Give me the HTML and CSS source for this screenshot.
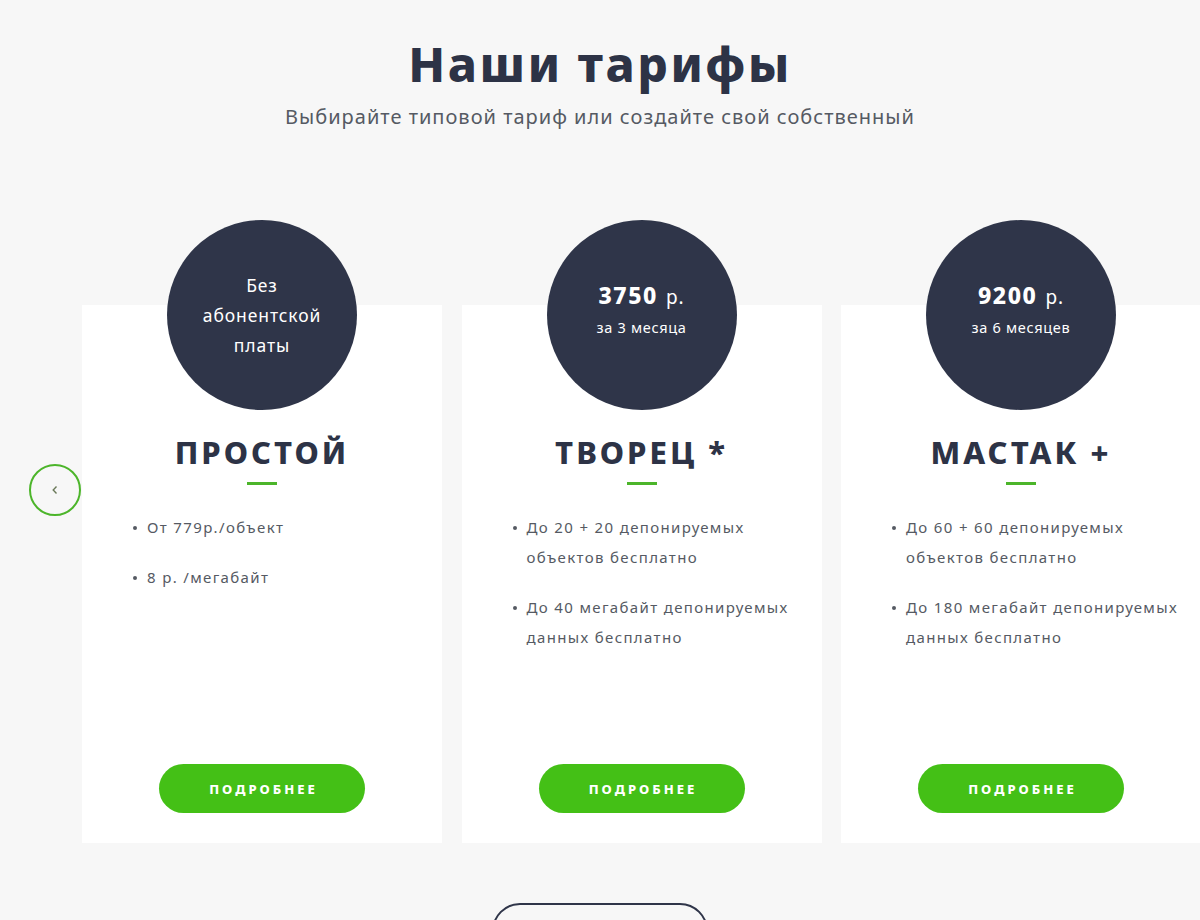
FILE: index.html
```html
<!DOCTYPE html>
<html lang="ru">
<head>
<meta charset="utf-8">
<title>Наши тарифы</title>
<link rel="stylesheet" href="styles.css">
</head>
<body>
<section class="tariffs">
  <header class="head">
    <h1 class="title">Наши тарифы</h1>
    <p class="subtitle">Выбирайте типовой тариф или создайте свой собственный</p>
  </header>
  <div class="slider">
    <button class="arrow" aria-label="Назад">
      <svg width="10" height="12" viewBox="0 0 10 12"><path d="M6.5 2.5 L3.2 6 L6.5 9.5" fill="none" stroke="#6b7a5a" stroke-width="1.4"/></svg>
    </button>
    <div class="track">
      <div class="card">
        <div class="badge"><span class="badge-text">Без<br>абонентской<br>платы</span></div>
        <h2 class="name">ПРОСТОЙ</h2>
        <span class="line"></span>
        <ul class="features">
          <li>От 779р./объект</li>
          <li>8 р. /мегабайт</li>
        </ul>
        <a class="more" href="#">ПОДРОБНЕЕ</a>
      </div>
      <div class="card">
        <div class="badge"><span class="price"><b>3750</b> р.</span><span class="period">за 3 месяца</span></div>
        <h2 class="name">ТВОРЕЦ *</h2>
        <span class="line"></span>
        <ul class="features">
          <li>До 20 + 20 депонируемых объектов бесплатно</li>
          <li>До 40 мегабайт депонируемых данных бесплатно</li>
        </ul>
        <a class="more" href="#">ПОДРОБНЕЕ</a>
      </div>
      <div class="card">
        <div class="badge"><span class="price"><b>9200</b> р.</span><span class="period">за 6 месяцев</span></div>
        <h2 class="name">МАСТАК +</h2>
        <span class="line"></span>
        <ul class="features">
          <li>До 60 + 60 депонируемых объектов бесплатно</li>
          <li>До 180 мегабайт депонируемых данных бесплатно</li>
        </ul>
        <a class="more" href="#">ПОДРОБНЕЕ</a>
      </div>
    </div>
  </div>
  <div class="bottom">
    <a class="outline" href="#">&nbsp;</a>
  </div>
</section>
</body>
</html>
```
FILE: styles.css
```css
* { box-sizing: border-box; }
html, body { margin: 0; padding: 0; }
body {
  background: #f7f7f7;
  font-family: "Noto Sans", "Open Sans", sans-serif;
  color: #2d3346;
  width: 1200px;
  height: 920px;
  overflow: hidden;
}
.tariffs { padding-top: 30px; }
.head { text-align: center; }
.title {
  margin: 0;
  font-size: 48px;
  line-height: 68px;
  font-weight: 800;
  letter-spacing: 2.6px;
  color: #2d3346;
}
.subtitle {
  margin: 7px 0 0;
  font-size: 20px;
  line-height: 24px;
  color: #555a63;
  letter-spacing: 1px;
}
.slider {
  position: relative;
  margin-top: 91px;
  padding-left: 82px;
  overflow: hidden;
}
.track {
  display: flex;
  gap: 19.5px;
  padding-top: 85px;
  width: 1300px;
}
.card {
  flex: 0 0 360px;
  height: 538px;
  background: #fff;
  display: flex;
  flex-direction: column;
  align-items: center;
}
.badge {
  width: 190px;
  height: 190px;
  margin-top: -85px;
  border-radius: 50%;
  background: #2f3549;
  color: #fff;
  display: flex;
  flex-direction: column;
  align-items: center;
  justify-content: center;
  text-align: center;
  flex: none;
}
.badge-text {
  font-size: 17.5px;
  line-height: 30px;
  margin-top: 0;
  letter-spacing: 0.9px;
}
.price {
  font-size: 19px;
  line-height: 26px;
  margin-top: -12px;
  letter-spacing: 1px;
}
.price b { font-size: 23px; font-weight: 800; letter-spacing: 1.6px; margin-right: 2px; }
.period {
  font-size: 14.5px;
  line-height: 20px;
  margin-top: 7px;
  letter-spacing: 0.7px;
}
.name {
  margin: 22px 0 0;
  font-size: 31px;
  line-height: 40px;
  font-weight: 800;
  letter-spacing: 3px;
  color: #2d3346;
}
.line {
  display: block;
  width: 30px;
  height: 3px;
  background: #4cb52a;
  margin-top: 10px;
}
.features {
  align-self: stretch;
  margin: 27px 0 0;
  padding: 0 12px 0 65px;
  list-style: none;
  flex: 1;
}
.features li {
  position: relative;
  font-size: 15px;
  line-height: 30px;
  color: #555a63;
  letter-spacing: 1.35px;
  margin-bottom: 20px;
}
.features li::before {
  content: "";
  position: absolute;
  left: -14px;
  top: 14px;
  width: 4px;
  height: 4px;
  border-radius: 50%;
  background: #555a63;
}
.more {
  width: 206px;
  height: 49px;
  border-radius: 25px;
  background: #44c016;
  color: #fff;
  text-decoration: none;
  font-weight: 800;
  font-size: 13px;
  letter-spacing: 3px;
  padding-left: 3px;
  display: flex;
  align-items: center;
  justify-content: center;
  margin-bottom: 30px;
}
.arrow {
  position: absolute;
  left: 29px;
  top: 244px;
  width: 52px;
  height: 52px;
  border-radius: 50%;
  border: 2px solid #4cb52a;
  background: #f7f7f7;
  padding: 0;
  display: flex;
  align-items: center;
  justify-content: center;
  z-index: 2;
}
.bottom {
  display: flex;
  justify-content: center;
  margin-top: 60px;
}
.outline {
  width: 216px;
  height: 56px;
  border: 2px solid #2f3549;
  border-radius: 30px;
  text-decoration: none;
}
```
